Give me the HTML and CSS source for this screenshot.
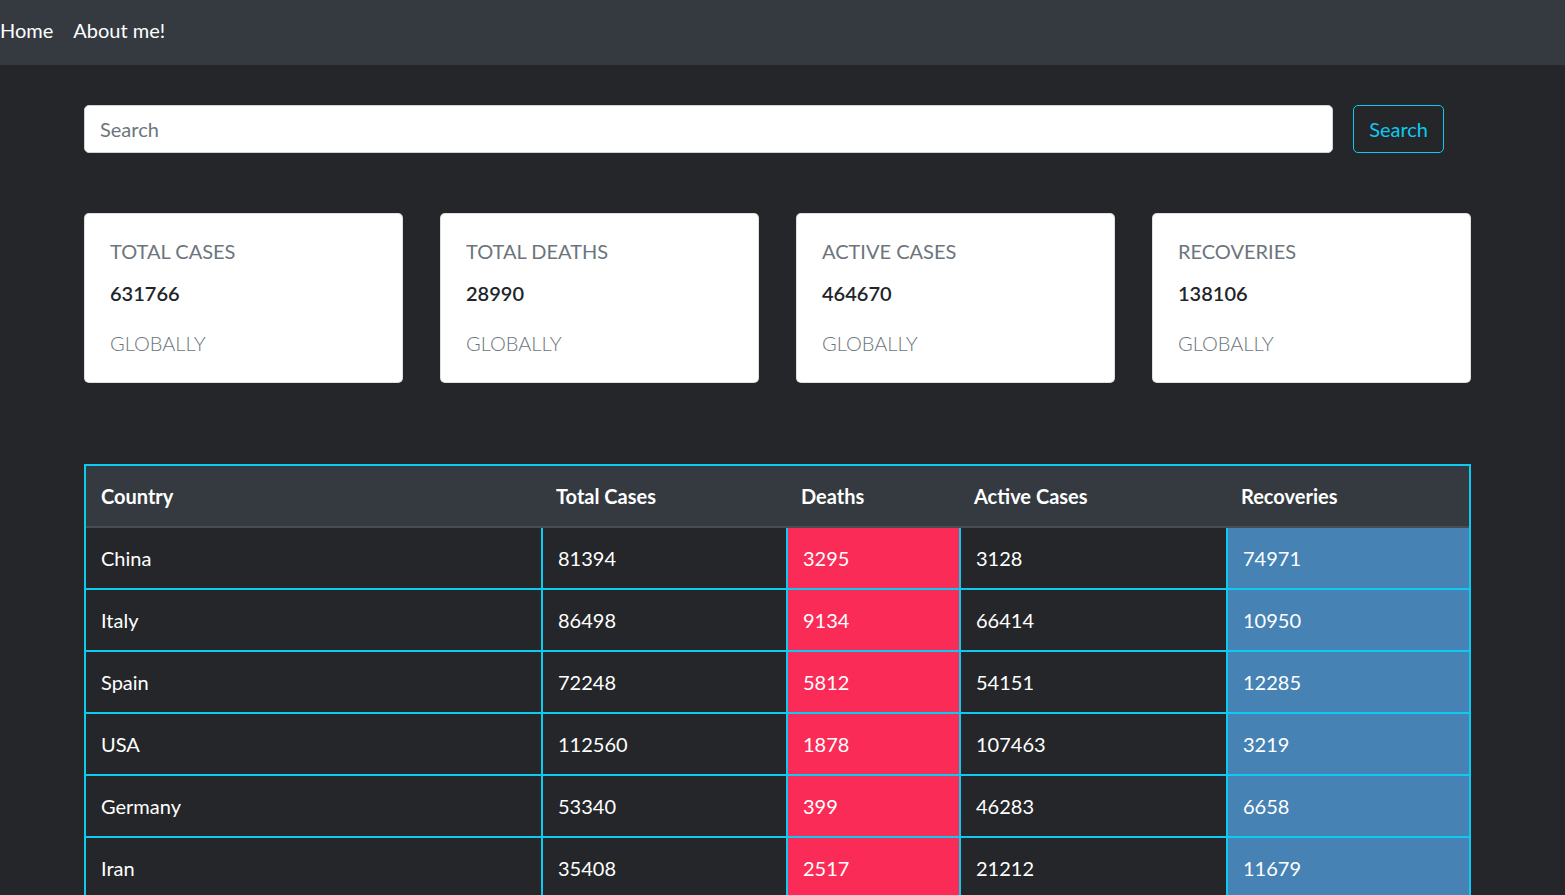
FILE: index.html
```html
<!DOCTYPE html>
<html lang="en">
<head>
<meta charset="utf-8">
<title>COVID-19 Tracker</title>
<link rel="stylesheet" href="styles.css">
</head>
<body>
<nav class="navbar">
  <a class="nav-link" href="#">Home</a>
  <a class="nav-link" href="#">About me!</a>
</nav>
<main class="page">
  <form class="search">
    <input class="search-input" type="text" placeholder="Search">
    <button class="search-btn" type="button">Search</button>
  </form>

  <section class="cards">
    <div class="card">
      <div class="card-title">TOTAL CASES</div>
      <div class="card-num">631766</div>
      <div class="card-sub">GLOBALLY</div>
    </div>
    <div class="card">
      <div class="card-title">TOTAL DEATHS</div>
      <div class="card-num">28990</div>
      <div class="card-sub">GLOBALLY</div>
    </div>
    <div class="card">
      <div class="card-title">ACTIVE CASES</div>
      <div class="card-num">464670</div>
      <div class="card-sub">GLOBALLY</div>
    </div>
    <div class="card">
      <div class="card-title">RECOVERIES</div>
      <div class="card-num">138106</div>
      <div class="card-sub">GLOBALLY</div>
    </div>
  </section>

  <table class="stats">
    <colgroup>
      <col class="c-country">
      <col class="c-total">
      <col class="c-deaths">
      <col class="c-active">
      <col class="c-rec">
    </colgroup>
    <thead>
      <tr><th>Country</th><th>Total Cases</th><th>Deaths</th><th>Active Cases</th><th>Recoveries</th></tr>
    </thead>
    <tbody>
      <tr><td>China</td><td>81394</td><td class="deaths">3295</td><td>3128</td><td class="rec">74971</td></tr>
      <tr><td>Italy</td><td>86498</td><td class="deaths">9134</td><td>66414</td><td class="rec">10950</td></tr>
      <tr><td>Spain</td><td>72248</td><td class="deaths">5812</td><td>54151</td><td class="rec">12285</td></tr>
      <tr><td>USA</td><td>112560</td><td class="deaths">1878</td><td>107463</td><td class="rec">3219</td></tr>
      <tr><td>Germany</td><td>53340</td><td class="deaths">399</td><td>46283</td><td class="rec">6658</td></tr>
      <tr><td>Iran</td><td>35408</td><td class="deaths">2517</td><td>21212</td><td class="rec">11679</td></tr>
    </tbody>
  </table>
</main>
</body>
</html>
```

FILE: styles.css
```css
html, body {
  margin: 0;
  padding: 0;
  background: #242629;
  font-family: "Lato", "Noto Sans", "Liberation Sans", sans-serif;
  font-size: 20px;
  line-height: 30px;
  overflow: hidden;
}

.navbar {
  height: 65px;
  box-sizing: border-box;
  background: #343a40;
  display: flex;
  align-items: center;
  gap: 20px;
  padding-bottom: 6px;
}

.nav-link {
  color: #fff;
  text-decoration: none;
  font-size: 20px;
}

.page {
  padding: 40px 94px 0 84px;
}

.search {
  display: flex;
  gap: 20px;
  padding-right: 27px;
  margin: 0;
}

.search-input {
  flex: 1;
  height: 48px;
  box-sizing: border-box;
  border: 1px solid #ced4da;
  border-radius: 5px;
  padding: 0 15px;
  font-family: inherit;
  font-size: 20px;
  color: #495057;
  background: #fff;
  outline: none;
}

.search-input::placeholder {
  color: #6c757d;
}

.search-btn {
  height: 48px;
  box-sizing: border-box;
  padding: 0 15px;
  border: 1px solid #0dcaf0;
  border-radius: 5px;
  background: transparent;
  color: #0dcaf0;
  font-family: inherit;
  font-size: 20px;
}

.cards {
  display: grid;
  grid-template-columns: repeat(4, 1fr);
  gap: 37px;
  margin-top: 60px;
}

.card {
  background: #fff;
  border: 1px solid rgba(0, 0, 0, 0.125);
  border-radius: 5px;
  padding: 22px 25px 24px;
}

.card-title {
  color: #6c757d;
  margin-bottom: 12px;
}

.card-num {
  color: #212529;
  font-weight: 600;
  margin-bottom: 20px;
}

.card-sub {
  color: #6c757d;
  font-weight: 300;
}

.stats {
  margin-top: 81px;
  width: 1387px;
  table-layout: fixed;
  border-collapse: separate;
  border-spacing: 0;
  border: 2px solid #0dcaf0;
  color: #fff;
}

.c-country { width: 455px; }
.c-total { width: 245px; }
.c-deaths { width: 173px; }
.c-active { width: 267px; }
.c-rec { width: 243px; }

.stats th {
  background: #343a40;
  text-align: left;
  font-weight: 700;
  padding: 15px;
  border-bottom: 2px solid #454d55;
}

.stats td {
  padding: 15px;
  border-bottom: 2px solid #0dcaf0;
}

.stats td + td {
  border-left: 2px solid #0dcaf0;
}

.stats .deaths {
  background: #fb2b57;
}

.stats .rec {
  background: #4682b4;
}
```
